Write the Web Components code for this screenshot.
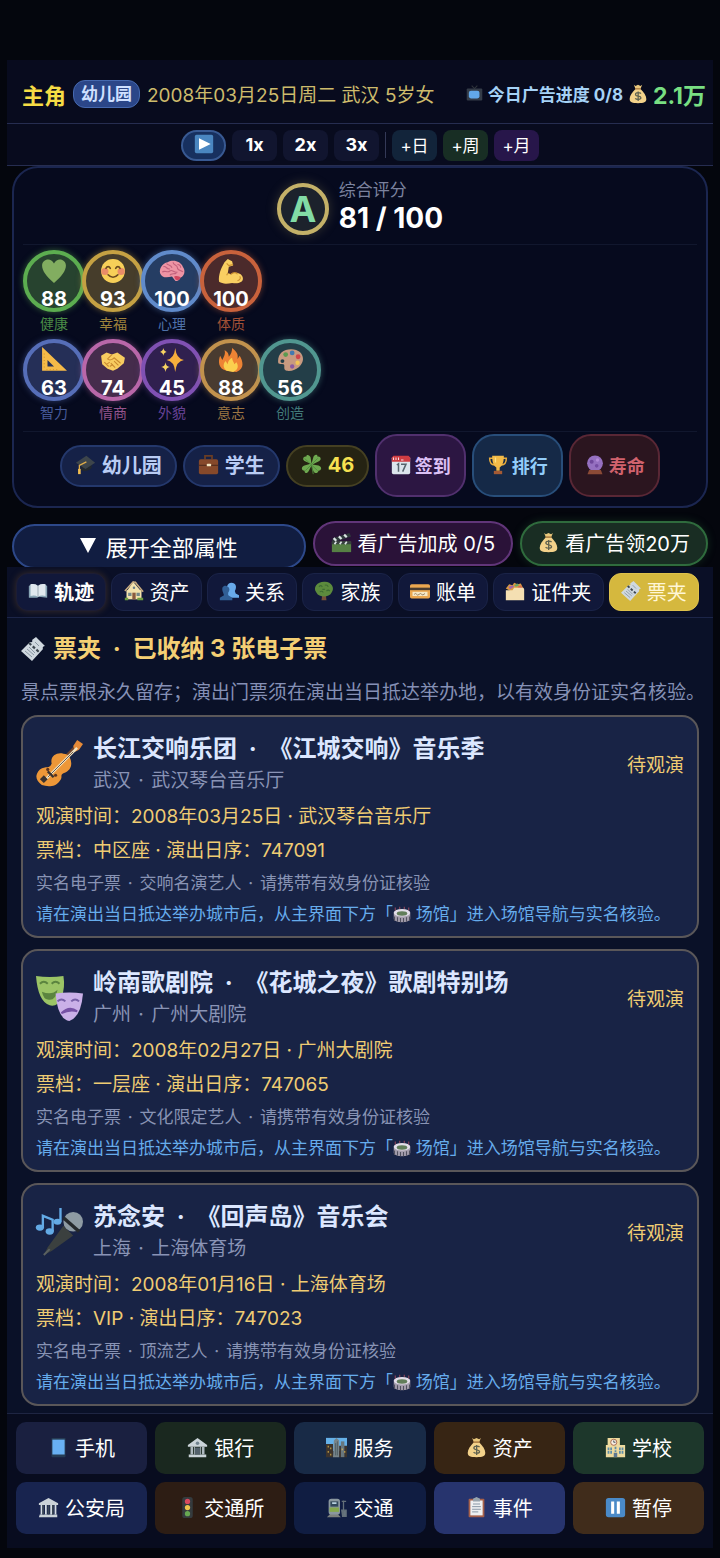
<!DOCTYPE html>
<html lang="zh-CN">
<head>
<meta charset="utf-8">
<meta name="viewport" content="width=device-width, initial-scale=1">
<title>票夹</title>
<style>
	body {
		margin: 0;
		padding: 60px 7px 9px;
		background: #04060d;
		color: #fff;
		font-family: Inter, "Noto Sans CJK SC", sans-serif;
		font-size: 20px;
	}
</style>
</head>
<body>
<life-app></life-app>

<script>
const ICONS = {
	play: '<rect x="1" y="1" width="22" height="22" rx="2" fill="#4a86c0"/><path d="M6 5l14 7-14 7z" fill="#fff"/>',
	pause: '<rect x="1" y="1" width="22" height="22" rx="3" fill="#4a8ac8"/><path d="M7 5h3.500v14H7zM13.500 5H17v14h-3.500z" fill="#fff"/>',
	tv: '<path d="M8 1l4 4 4-4" stroke="#30353c" stroke-width="1.500" fill="none"/><rect x="1" y="5" width="22" height="17" rx="1.500" fill="#343c48"/><rect x="4" y="8" width="15" height="11" rx="3" fill="#62a8ea"/>',
	bag: '<path d="M7 1l2 1.500L12 1l3 1.500L17 1l-2 5H9z" fill="#e9c77c"/><path d="M9 6h6c4 4 7 8 7 12 0 4-3 5-10 5S2 22 2 18c0-4 3-8 7-12z" fill="#f3d28a"/><path d="M8.500 5.800h7" stroke="#a8763c" stroke-width="1.500"/><path d="M15.500 11.500c-1-1.500-6.500-1.800-6.500 1s6.500 1.500 6.500 4-5.500 2.500-6.800.700M12.200 9v11.500" fill="none" stroke="#5f6250" stroke-width="1.500"/>',
	heart: '<path d="M12 23C5 17 1 12 1 7c0-6 8-8 11-2 3-6 11-4 11 2 0 5-4 10-11 16z" fill="#82ad60"/>',
	smile: '<circle cx="12" cy="12" r="11" fill="#f7cf58"/><circle cx="4.500" cy="12.500" r="3.300" fill="#e98c68"/><circle cx="19.500" cy="12.500" r="3.300" fill="#e98c68"/><path d="M5.500 9.500c1-2 3-2 4 0M14.500 9.500c1-2 3-2 4 0M7.500 15.500c2.500 3 6.500 3 9 0" fill="none" stroke="#6b4a20" stroke-width="1.500" stroke-linecap="round"/>',
	brain: '<path d="M1 14c-1-4 2-9 7-10 5-3 12-1 14 4 3 4 1 9-2 10-1 2-3 4-5 3l-3-4c-4 1-9 2-11-3z" fill="#ed94a4"/><path d="M14 17c3-1 5 0 6 1-1 3-5 4-6-1z" fill="#cf4660"/><path d="M4 8c3-1 3 3 6 2M7 5c1 2 4 1 5 4M13 4c0 3 4 2 4 5s4 2 5 4M3 13c2-2 5 1 7-1s4 2 7 1M10 16c1-2 4-1 6-2M17 6c2 0 3 1 3 3" fill="none" stroke="#c2617c" stroke-width="1"/>',
	muscle: '<path d="M1 22C0 16 3 9 6 4l3-3 4 2 1 4-4 1-1 6c2 0 2 1 3 1 4-3 11-1 11 4 0 4-5 5-10 4-5 1-9 1-12-1z" fill="#f9cf62"/><path d="M8 5l2 2 4-1M9 14l-1 2M12 15c2-2 5-2 6 0M20 17c1 1 1 3-2 4" fill="none" stroke="#c98d2e" stroke-width="1"/>',
	ruler: '<path d="M1 0v22h23zM6 12l6 6H6z" fill="#f5ba48" fill-rule="evenodd"/><path d="M3 6v14M5 21h12" stroke="#d39228" stroke-width="1" stroke-dasharray="1 2"/>',
	hands: '<path d="M1 8l5-3 5 2 5-2 7 5-1 5-6 5-4 2-5-2-5-4z" fill="#f8cc60"/><path d="M11 7l-4 4c2 2 5 0 6-1l6 5M4 14l4 4M10 15l4 4M13 13l4 4M6 16l3-2M9 18l3-2" fill="none" stroke="#c98a30" stroke-width="1"/>',
	sparkle: '<path d="M15 1q1 10 8 11-7 1-8 11-1-10-8-11 7-1 8-11z" fill="#f6ae3c"/><path d="M4 1q.500 3 3 3.500Q4.500 5 4 8 3.500 5 1 4.500 3.500 4 4 1zM6 14q.500 4 4 4.500-3.500.500-4 4.500-.500-4-4-4.500 3.500-.500 4-4.500z" fill="#f8d462"/>',
	fire: '<path d="M8 22C0 20 0 13 2 8l2 4c2-4 3-6 2-9 3 1 4 4 4 6 2-2 3-5 3-8 4 3 6 6 5 10l2-3c3 5 5 12-3 15z" fill="#ee8334"/><path d="M8 22c-4-3-3-7-1-9l2 3c0-3 2-5 4-6 0 3 2 4 2 6l2-2c2 3 2 7-3 9z" fill="#fbd04e"/>',
	palette: '<path d="M9 22c-4-1-1-5-3-6-3-1-5 1-5-3C1 6 6 2 13 2c7 0 11 4 11 9s-6 12-15 11z" fill="#c89a80"/><circle cx="5" cy="13" r="1.800" fill="#233e48"/><circle cx="8" cy="7" r="2.200" fill="#5a9a50"/><circle cx="14" cy="5.500" r="2.200" fill="#4379b0"/><circle cx="19.500" cy="9" r="2.200" fill="#d1464a"/><circle cx="19" cy="14.500" r="2" fill="#f2c454"/><circle cx="14" cy="18" r="2" fill="#8b5aa0"/>',
	cap: '<path d="M7 12v6c3 3 9 1 12-2v-5z" fill="#22282e"/><path d="M1 10L13 2l10 8-11 7z" fill="#3d454b"/><path d="M13 9L5 13v6" fill="none" stroke="#e0ae4a" stroke-width="1.500"/><path d="M3.500 17h3v6h-3z" fill="#f1bd50"/>',
	case: '<path d="M8 6V2h8v4" fill="none" stroke="#6a3d24" stroke-width="2"/><rect x="1" y="6" width="22" height="17" rx="2" fill="#86492a"/><path d="M1 13h22" stroke="#59301d" stroke-width="1.500"/><rect x="10" y="11" width="5" height="3" rx="1" fill="#f4e6c0"/>',
	clover: '<path d="M11 11L4 8C1 6 3 2 6 3c0-3 4-2 5 1l1 7 2-7c1-4 5-4 5-1 3-1 5 3 2 5l-8 4 7 1c5 2 3 6 0 6-1 4-5 3-6 0l-2-6-3 6c-2 4-5 3-5 0-4 0-4-5 0-6z" fill="#6ea950"/><path d="M12 12l2 11M4 5l15 14M19 5L5 19" fill="none" stroke="#4f8c3e" stroke-width="1"/>',
	calendar: '<rect x="1" y="2" width="22" height="21" rx="2" fill="#dce5ec"/><path d="M1 8V3l2-2h18l2 2v5z" fill="#cf3c42"/><path d="M3 3v3M6 3v3M9 3v3M12 6h3" stroke="#fff"/><path d="M7 12l2-1.500V20M12 11h6l-4 9" fill="none" stroke="#56646c" stroke-width="1.800"/>',
	trophy: '<path d="M6 4H2c0 6 3 8 6 8M18 4h4c0 6-3 8-6 8" fill="none" stroke="#e9ac3c" stroke-width="1.800"/><path d="M5 1h14c0 9-2 12-5 14v4h-4v-4C7 13 5 10 5 1z" fill="#f3bb48"/><path d="M7 19h10v4H7z" fill="#a45a34"/><path d="M9 3v6" stroke="#fbe187" stroke-width="1.500"/>',
	crystal: '<circle cx="12" cy="10" r="9.500" fill="#9570c0"/><path d="M5 18h14l2 5H3z" fill="#8b4a36"/><circle cx="8" cy="8" r="2.400" fill="#70489c"/><circle cx="15" cy="6" r="2" fill="#b38bd8"/><circle cx="14" cy="13" r="2.200" fill="#754da3"/>',
	clapper: '<path d="M1 11h22v12H1z" fill="#568044"/><path d="M1 11L2 7l19-6 2 4-18 6z" fill="#2f3a3c"/><path d="M3 7l3 3M9 5l3 3M15 3l3 3" stroke="#dce4e4" stroke-width="2.500"/><path d="M1 11h22v3H1z" fill="#37423e"/><path d="M4 14l2-3M10 14l2-3M16 14l2-3" stroke="#dce4e4" stroke-width="2"/>',
	book: '<path d="M1 6l3-2c3-1 6 0 8 2 2-2 5-3 8-2l3 2v14l-10-1-2 1-10 0z" fill="#88a5b5"/><path d="M3 4c4-1 7 0 9 2v13c-3-2-6-2-9-1zM21 4c-4-1-7 0-9 2v13c3-2 6-2 9-1z" fill="#e0e8ee"/><path d="M12 6v13" stroke="#90a0aa"/>',
	house: '<path d="M3 11h18v11H3z" fill="#f3e2ac"/><path d="M3 13l8-12 10 12z" fill="#f3e2ac"/><path d="M1 12L11 1l4 1M13 1l10 12" fill="none" stroke="#c8ab80" stroke-width="1.800"/><path d="M5 14h4v4H5zM15 14h4v4h-4z" fill="#75878a"/><path d="M10 14h4v8h-4z" fill="#8a5a40"/><path d="M1 20h4v3H1zM16 20h7v3h-7z" fill="#6c9d42"/><circle cx="12" cy="8" r="1.500" fill="#6b7d86"/>',
	people: '<path d="M10 15v-4c-1-2-1-9 5-9 5 0 7 5 4 10l1 3 4 2v3H12z" fill="#68aaea"/><path d="M1 23v-3l5-3-1-3C2 7 6 5 9 6s5 4 2 8v3l5 3v3z" fill="#315f96"/>',
	tree: '<path d="M10 16h4l1 7H9z" fill="#765038"/><path d="M12 1c8-1 14 7 9 13-3 6-15 6-18 0C-2 8 4 1 12 1z" fill="#5c8b3d"/><path d="M6 7q2-3 4 0M13 5q3-1 4 2M7 13q3-2 4 1M15 12q2-2 4 0M10 10h3" fill="none" stroke="#3e6c33" stroke-width="1.300"/>',
	card: '<rect x="0" y="4" width="24" height="17" rx="2" fill="#eba750"/><path d="M0 8h24v3H0z" fill="#4a3c30"/><path d="M3 13h18v5H3z" fill="#f6e7c5"/><path d="M5 16q2-2 3 0t3 0 3 0 4-1" fill="none" stroke="#8a7254"/>',
	folder: '<path d="M1 9l4-5 4 1 2-3 4 2 4-1 4 8-9 5z" fill="#d99a42"/><path d="M4 7l5-2 2 2-5 3z" fill="#a266a8"/><path d="M11 5l4-2 2 2-4 2z" fill="#66a466"/><path d="M15 7l4-2 2 3-4 2z" fill="#d66a4c"/><path d="M1 11h8l2-3h11l1 2v13H1z" fill="#f4dfb2"/>',
	ticket: '<path d="M15 0l9 9c-2 0-3 2-2 3L11 24l-11-10 9-9c2 1 3-1 2-2z" fill="#cfd8df"/><path d="M8 6l10 9" stroke="#3c464f" stroke-width="2.200" stroke-dasharray="3 2"/><path d="M4 14l7 6M6 12l7 6M8 10l6 6" stroke="#8996a2" stroke-width="1"/><path d="M14 5l4 4" stroke="#8996a2"/>',
	violin: '<path d="M12 12l9-9" stroke="#70452e" stroke-width="2"/><path d="M19 3l2-3 3 2-2 3-2 1z" fill="#e68a38"/><path d="M2 15c3-2 5 0 6-3-1-4 3-6 6-5 3 0 4 3 4 5s-1 4-4 5c-2 1 0 2-2 4-2 3-6 3-9 2-3-2-4-5-1-8z" fill="#ed9738"/><path d="M5 20L21 4" stroke="#f3e5c3" stroke-width="1.300"/><path d="M6 19L19 6" stroke="#625148" stroke-width=".500"/><path d="M2 20l2-2 2 2-2 2z" fill="#3b3330"/><path d="M6 16l3 3" stroke="#3b3330" stroke-width="1.200"/><circle cx="6" cy="15" r=".800" fill="#5c3420"/><circle cx="10" cy="18" r=".800" fill="#5c3420"/>',
	masks: '<path d="M0 1q7 1 14 0 1 6-1 11t-6 4Q1 14 0 1z" fill="#9bc466"/><path d="M2 5q2-2 4 0M8 5q2-2 4 0" stroke="#5b843f" fill="none"/><path d="M3 9q5 2 8-1-1 6-5 5-2 0-3-4z" fill="#5b843f"/><path d="M10 10q7-1 14 0-1 12-7 14-6-1-7-14z" fill="#cab0e8"/><path d="M11 14q2-2 4 0M18 14q2-2 4 0" stroke="#7860a8" fill="none"/><path d="M13 20q4-4 8-1-4-1-8 1z" fill="#7651a5" stroke="#7651a5"/>',
	mic: '<path d="M14 9l5 5-11 8-4 2 2-4z" fill="#3b403f"/><path d="M7 21l-3 3" stroke="#5a6060"/><circle cx="19" cy="7" r="5" fill="#8e9ba3"/><path d="M14 5l8 7" stroke="#25292c" stroke-width="1.800"/><ellipse cx="2" cy="10" rx="2.100" ry="1.600" fill="#63aae5"/><ellipse cx="7" cy="12" rx="2.100" ry="1.600" fill="#63aae5"/><path d="M3.500 10V4l5 2v6M12.500 7V0" fill="none" stroke="#63aae5" stroke-width="1.200"/><ellipse cx="11" cy="7" rx="2" ry="1.500" fill="#63aae5"/>',
	stadium: '<path d="M1 9v8c0 6 22 6 22 0V9z" fill="#a69fae"/><path d="M2 14v6M6 15v6M10 16v6M14 16v6M18 15v6M22 14v6" stroke="#50505e" stroke-width="1.500"/><ellipse cx="12" cy="9" rx="11" ry="5" fill="#e2dde8"/><ellipse cx="12" cy="10" rx="7" ry="3" fill="#617d59"/><path d="M3 6V2M9 4V1M15 4V1M21 6V2" stroke="#c65568"/>',
	phone: '<rect x="4" y="1" width="16" height="22" rx="1" fill="#263c54"/><path d="M5 3h14v17H5z" fill="#68b0f3"/>',
	bank: '<path d="M1 9l11-8 11 8v2H1zM2 20h20v3H2z" fill="#cbd4d9"/><path d="M4 11h3v9H4zM17 11h3v9h-3zM8 11h1v9H8zM15 11h1v9h-1z" fill="#aeb8bf"/><path d="M9 12h6v8H9z" fill="#53616b"/><circle cx="12" cy="7" r="2" fill="#728490"/>',
	museum: '<path d="M1 7l11-6 11 6v2H1zM2 20h20v3H1z" fill="#cbd3d8"/><path d="M4 9v11M9 9v11M15 9v11M20 9v11" stroke="#d5dde2" stroke-width="2"/><path d="M6 9v11M12 9v11M17 9v11" stroke="#3b4855" stroke-width="2"/>',
	city: '<path d="M0 1h24v15H0z" fill="#65b1e8"/><path d="M0 8h8v15H0zM15 10h9v13h-9z" fill="#3d342d"/><path d="M9 4l3-3 3 3v19H8z" fill="#778489"/><path d="M17 5h4v18h-4z" fill="#68777e"/><path d="M2 11h1M5 13h1M2 17h1M5 20h1M18 14h1M21 17h1" stroke="#f1c44e" stroke-width="2"/><path d="M11 7v14M13 5v16" stroke="#4c5b62"/>',
	school: '<path d="M3 1h14v8h6v14H1V9h2z" fill="#edda9e"/><circle cx="10" cy="6" r="3.500" fill="#f5eee2" stroke="#a45f45"/><path d="M10 4v2h2" stroke="#384450" fill="none"/><path d="M4 12v8M7 12v8M17 12v8M20 12v8M12 11v6" stroke="#5d8eaa" stroke-width="2" stroke-dasharray="3 1"/><path d="M10 18h4v5h-4z" fill="#5e7890"/>',
	light: '<rect x="6" y="0" width="12" height="24" rx="3" fill="#353b3e"/><circle cx="12" cy="5" r="3" fill="#d8495e"/><circle cx="12" cy="12" r="3" fill="#edc54d"/><circle cx="12" cy="19" r="3" fill="#67a852"/>',
	station: '<path d="M5 19l-4 4h16l-4-4z" fill="#7d817e"/><rect x="3" y="2" width="13" height="18" rx="3" fill="#8a979f"/><path d="M5 5h9v6H5z" fill="#33495b"/><path d="M4 12h11v5H4z" fill="#86a94d"/><path d="M7 7h5" stroke="#b9d2df" stroke-width="2"/><path d="M20 4v16M18 5h5M18 15h5v7h-4z" fill="#68777f" stroke="#637079" stroke-width="1.500"/>',
	clipboard: '<rect x="3" y="2" width="18" height="21" rx="1" fill="#a6604a"/><path d="M5 4h14v17H5z" fill="#eef0f2"/><path d="M8 2l4-2 4 2v3H8z" fill="#98a4ad"/><path d="M8 8h8M7 11h10M7 14h10M7 17h7" stroke="#7b8b9b"/>'
};

class LifeIcon extends HTMLElement {
	connectedCallback() {
		const shadow = this.attachShadow({ mode: 'open' });
		shadow.innerHTML = `
      <style>
        :host {
          display: inline-block;
          flex: none;
          width: var(--icon-size, 20px);
          height: var(--icon-size, 20px);
          vertical-align: middle;
        }
        svg { display: block; width: 100%; height: 100%; overflow: visible; }
      </style>
      <svg viewBox="0 0 24 24" aria-hidden="true">${ICONS[this.getAttribute('name')] ?? ''}</svg>
    `;
	}
}

// Shared button: colours and box come in through custom properties
class LifeButton extends HTMLElement {
	connectedCallback() {
		const shadow = this.attachShadow({ mode: 'open' });
		const icon = this.getAttribute('icon');
		shadow.innerHTML = `
      <style>
        :host { display: block; }
        button {
          box-sizing: border-box;
          display: flex;
          align-items: center;
          justify-content: center;
          gap: var(--gap, 6px);
          width: 100%;
          min-height: var(--height, 38px);
          padding: 0 var(--pad, 0px) 2px;
          border: var(--line, 1px) solid var(--edge, transparent);
          border-radius: var(--radius, 12px);
          background: var(--fill, #12183a);
          box-shadow: var(--glow, none);
          color: inherit;
          font: inherit;
          white-space: nowrap;
          cursor: pointer;
        }
      </style>
      <button type="button">
        ${icon ? `<life-icon name="${icon}"></life-icon>` : ''}
        <slot></slot>
      </button>
    `;
		if (this.hasAttribute('label')) {
			shadow.querySelector('button').setAttribute('aria-label', this.getAttribute('label'));
		}
	}
}

class StatusHeader extends HTMLElement {
	connectedCallback() {
		this.attachShadow({ mode: 'open' }).innerHTML = `
      <style>
        :host {
          display: flex;
          align-items: center;
          justify-content: space-between;
          min-height: 63px;
          padding: 4px 7px 0 15px;
          box-sizing: border-box;
          background: #080b1e;
          white-space: nowrap;
        }
        div { display: flex; align-items: center; gap: 7px; }
        .name { color: #f6dd45; font-size: 22px; font-weight: 700; }
        .stage {
          padding: 0 7px;
          border: 1px solid #4568ae;
          border-radius: 12px;
          background: #2b4688;
          color: #cfe0ff;
          font-size: 17px;
          font-weight: 700;
          line-height: 26px;
        }
        .date { color: #cdbb6c; font-size: 19px; }
        .ads { color: #a5d2f6; font-size: 17px; font-weight: 700; }
        .money { color: #78df82; font-size: 23px; font-weight: 700; }
        .right { gap: 5px; --icon-size: 17px; }
        .bag { --icon-size: 20px; }
      </style>
      <div>
        <span class="name">主角</span>
        <span class="stage">幼儿园</span>
        <span class="date">2008年03月25日周二 武汉 5岁女</span>
      </div>
      <div class="right">
        <life-icon name="tv"></life-icon>
        <span class="ads">今日广告进度 0/8</span>
        <life-icon class="bag" name="bag"></life-icon>
        <span class="money">2.1万</span>
      </div>
    `;
	}
}

class SpeedBar extends HTMLElement {
	connectedCallback() {
		this.attachShadow({ mode: 'open' }).innerHTML = `
      <style>
        :host {
          display: flex;
          align-items: center;
          justify-content: center;
          gap: 6px;
          min-height: 43px;
          border-top: 1px solid #262d50;
          border-bottom: 1px solid #262d50;
          background: #080b1e;
          padding-top: 1px;
          box-sizing: border-box;
          font-size: 17px;
        }
        life-button { width: 45px; --line: 0px; --height: 31px; --radius: 8px; --fill: #11152f; }
        .play { --radius: 16px; --fill: #17305f; --edge: #385992; --line: 2px; --icon-size: 20px; }
        .speed { font-size: 18px; font-weight: 700; }
        .day { --fill: #12243a; }
        .week { --fill: #182e24; }
        .month { --fill: #27164a; }
        i { width: 1px; height: 26px; background: #343957; }
      </style>
      <life-button class="play" icon="play" label="播放"></life-button>
      <life-button class="speed">1x</life-button>
      <life-button class="speed">2x</life-button>
      <life-button class="speed">3x</life-button>
      <i></i>
      <life-button class="day">+日</life-button>
      <life-button class="week">+周</life-button>
      <life-button class="month">+月</life-button>
    `;
	}
}

class StatRing extends HTMLElement {
	connectedCallback() {
		this.style.setProperty('--ring', this.getAttribute('ring'));
		this.style.setProperty('--core', this.getAttribute('core'));
		this.attachShadow({ mode: 'open' }).innerHTML = `
      <style>
        :host {
          display: block;
          width: 62px;
          margin-right: -3px;
          text-align: center;
          color: var(--ring);
          font-size: 14px;
          line-height: 24px;
          --icon-size: 26px;
        }
        .ring {
          display: flex;
          flex-direction: column;
          align-items: center;
          box-sizing: border-box;
          height: 62px;
          padding-top: 4px;
          border: 4px solid var(--ring);
          border-radius: 50%;
          background: var(--core);
          box-shadow: 0 0 6px color-mix(in srgb, var(--ring) 50%, transparent);
        }
        b { color: #fff; font-size: 20px; line-height: 30px; }
        .label { opacity: .8; }
      </style>
      <div class="ring">
        <life-icon name="${this.getAttribute('icon')}"></life-icon>
        <b>${this.getAttribute('value')}</b>
      </div>
      <div class="label"><slot></slot></div>
    `;
	}
}

class ScorePanel extends HTMLElement {
	connectedCallback() {
		this.attachShadow({ mode: 'open' }).innerHTML = `
      <style>
        :host {
          display: block;
          margin: 0 5px;
          padding: 0 9px;
          border: 2px solid #1b2650;
          border-radius: 26px;
          background: #060a1e;
        }
        .score {
          display: flex;
          align-items: center;
          justify-content: center;
          gap: 10px;
          padding: 13px 0 7px;
          border-bottom: 1px solid #11172e;
        }
        .grade {
          display: grid;
          place-items: center;
          box-sizing: border-box;
          width: 52px;
          height: 52px;
          border: 4px solid #c4b168;
          border-radius: 50%;
          background: #1c222c;
          box-shadow: 0 0 12px #c4b16840;
          color: #82dba5;
          font-size: 36px;
          font-weight: 700;
        }
        .label { color: #7b829e; font-size: 17px; line-height: 18px; }
        .value { font-size: 28px; font-weight: 700; line-height: 38px; }
        .stats { padding: 5px 0 6px; border-bottom: 1px solid #11172e; }
        .row { display: flex; }
        .row + .row { margin-top: 3px; }
        .pills {
          display: flex;
          align-items: center;
          justify-content: center;
          gap: 6px;
          padding: 2px 0 9px;
          font-weight: 700;
          --radius: 22px;
          --icon-size: 21px;
        }
        .pills life-button { --line: 2px; --height: 42px; --pad: 13px; color: #b9ccf4; --fill: #152147; --edge: #24386c; }
        .pills .luck { color: #f6e151; --fill: #252313; --edge: #454022; }
        .pills .big { box-sizing: border-box; width: 91px; font-size: 18px; --height: 63px; --gap: 4px; --pad: 9px; --icon-size: 20px; }
        .pills .sign { color: #dcc0f5; --fill: #2c1642; --edge: #51306e; }
        .pills .rank { color: #92cdfa; --fill: #152947; --edge: #284e7a; }
        .pills .life { color: #d0626d; --fill: #2b151f; --edge: #592735; }
      </style>
      <div class="score">
        <span class="grade">A</span>
        <div>
          <div class="label">综合评分</div>
          <div class="value">81 / 100</div>
        </div>
      </div>
      <div class="stats">
        <div class="row">
          <stat-ring icon="heart" value="88" ring="#5cad50" core="#27432f">健康</stat-ring>
          <stat-ring icon="smile" value="93" ring="#c5a143" core="#463d2b">幸福</stat-ring>
          <stat-ring icon="brain" value="100" ring="#608bcb" core="#253d63">心理</stat-ring>
          <stat-ring icon="muscle" value="100" ring="#c9623c" core="#4b2a2b">体质</stat-ring>
        </div>
        <div class="row">
          <stat-ring icon="ruler" value="63" ring="#566eb8" core="#252f57">智力</stat-ring>
          <stat-ring icon="hands" value="74" ring="#b967a9" core="#452c4c">情商</stat-ring>
          <stat-ring icon="sparkle" value="45" ring="#8051b3" core="#30204f">外貌</stat-ring>
          <stat-ring icon="fire" value="88" ring="#c2924d" core="#493b30">意志</stat-ring>
          <stat-ring icon="palette" value="56" ring="#519790" core="#233e48">创造</stat-ring>
        </div>
      </div>
      <div class="pills">
        <life-button icon="cap">幼儿园</life-button>
        <life-button icon="case">学生</life-button>
        <life-button class="luck" icon="clover">46</life-button>
        <life-button class="big sign" icon="calendar">签到</life-button>
        <life-button class="big rank" icon="trophy">排行</life-button>
        <life-button class="big life" icon="crystal">寿命</life-button>
      </div>
    `;
	}
}

class ActionRow extends HTMLElement {
	connectedCallback() {
		this.attachShadow({ mode: 'open' }).innerHTML = `
      <style>
        :host {
          display: flex;
          align-items: flex-start;
          gap: 7px;
          padding: 13px 5px 0;
          --line: 2px;
          --height: 45px;
          --radius: 23px;
          --pad: 16px;
          --icon-size: 21px;
        }
        .expand { flex: 1; margin-top: 3px; margin-bottom: -2px; font-size: 22px; --fill: #111d41; --edge: #2d4889; }
        .boost { --fill: #2a1238; --edge: #613579; }
        .cash { --fill: #192d23; --edge: #2f6b3d; --glow: 0 0 8px #2f6b3d50; }
        i { border: 8px solid transparent; border-top: 15px solid #fff; border-bottom: 0; margin-right: 4px; }
      </style>
      <life-button class="expand"><i></i>展开全部属性</life-button>
      <life-button class="boost" icon="clapper">看广告加成 0/5</life-button>
      <life-button class="cash" icon="bag">看广告领20万</life-button>
    `;
	}
}

class TabStrip extends HTMLElement {
	connectedCallback() {
		this.attachShadow({ mode: 'open' }).innerHTML = `
      <style>
        :host {
          display: block;
          position: relative;
          padding: 6px 14px 6px 9px;
          border-bottom: 1px solid #1c2548;
          background: #0a0f26;
        }
        nav { display: flex; gap: 5px; }
        life-button { flex: 1 0 auto; --pad: 9px; --fill: #11183a; --edge: #1a2347; }
        .track { font-weight: 700; --edge: #1d1d34; --glow: 0 0 7px #8d633060; }
        .tickets { --fill: #d5b83e; --edge: #dec14b; color: #fff6d6; }
      </style>
      <nav>
        <life-button class="track" icon="book">轨迹</life-button>
        <life-button icon="house">资产</life-button>
        <life-button icon="people">关系</life-button>
        <life-button icon="tree">家族</life-button>
        <life-button icon="card">账单</life-button>
        <life-button icon="folder">证件夹</life-button>
        <life-button class="tickets" icon="ticket">票夹</life-button>
      </nav>
    `;
	}
}

class TicketCard extends HTMLElement {
	connectedCallback() {
		this.attachShadow({ mode: 'open' }).innerHTML = `
      <style>
        :host {
          display: block;
          padding: 14px 13px 7px;
          border: 2px solid #5a5759;
          border-radius: 17px;
          background: #182345;
          color: #efcc73;
          font-size: 19px;
        }
        header { display: flex; align-items: center; gap: 10px; --icon-size: 47px; }
        hgroup { flex: 1; margin: 0; }
        h3 { margin: 0; color: #dce7ff; font-size: 24px; line-height: 36px; }
        p { margin: 0; white-space: nowrap; }
        i { padding: 0 2px; font-style: normal; }
        .place { color: #8993b5; line-height: 28px; }
        .line { line-height: 34px; }
        .note { color: #8893b4; font-size: 17px; line-height: 31px; }
        .hint { color: #66acec; font-size: 17px; line-height: 30px; --icon-size: 18px; }
        main { padding-top: 5px; }
      </style>
      <header>
        <life-icon name="${this.getAttribute('icon')}"></life-icon>
        <hgroup>
          <h3><slot name="title"></slot></h3>
          <p class="place"><slot name="place"></slot></p>
        </hgroup>
        <span class="status">待观演</span>
      </header>
      <main>
        <p class="line">观演时间：<slot name="time"></slot></p>
        <p class="line">票档：<slot name="seat"></slot></p>
        <p class="note">实名电子票 <i>·</i> <slot name="artist"></slot> <i>·</i> 请携带有效身份证核验</p>
        <p class="hint">请在演出当日抵达举办城市后，从主界面下方「<life-icon name="stadium"></life-icon> 场馆」进入场馆导航与实名核验。</p>
      </main>
    `;
	}
}

class TicketWallet extends HTMLElement {
	connectedCallback() {
		this.attachShadow({ mode: 'open' }).innerHTML = `
      <style>
        :host {
          display: block;
          padding: 13px 14px 7px;
          background: #0a1128;
        }
        h2 {
          display: flex;
          align-items: center;
          gap: 8px;
          margin: 0;
          color: #f4cf74;
          font-size: 24px;
          line-height: 36px;
          --icon-size: 24px;
        }
        i { padding: 0 2px; font-style: normal; }
        h2 i, [slot="title"] i { padding: 0 6px; }
        .about { margin: 11px 0 7px; color: #8590b5; font-size: 19px; line-height: 30px; white-space: nowrap; }
        .list { display: grid; gap: 11px; }
      </style>
      <h2><life-icon name="ticket"></life-icon><span>票夹 <i>·</i> 已收纳 3 张电子票</span></h2>
      <p class="about">景点票根永久留存；演出门票须在演出当日抵达举办地，以有效身份证实名核验。</p>
      <div class="list">
        <ticket-card icon="violin">
          <span slot="title">长江交响乐团 <i>·</i> 《江城交响》音乐季</span>
          <span slot="place">武汉 <i>·</i> 武汉琴台音乐厅</span>
          <span slot="time">2008年03月25日 · 武汉琴台音乐厅</span>
          <span slot="seat">中区座 · 演出日序：747091</span>
          <span slot="artist">交响名演艺人</span>
        </ticket-card>
        <ticket-card icon="masks">
          <span slot="title">岭南歌剧院 <i>·</i> 《花城之夜》歌剧特别场</span>
          <span slot="place">广州 <i>·</i> 广州大剧院</span>
          <span slot="time">2008年02月27日 · 广州大剧院</span>
          <span slot="seat">一层座 · 演出日序：747065</span>
          <span slot="artist">文化限定艺人</span>
        </ticket-card>
        <ticket-card icon="mic">
          <span slot="title">苏念安 <i>·</i> 《回声岛》音乐会</span>
          <span slot="place">上海 <i>·</i> 上海体育场</span>
          <span slot="time">2008年01月16日 · 上海体育场</span>
          <span slot="seat">VIP · 演出日序：747023</span>
          <span slot="artist">顶流艺人</span>
        </ticket-card>
      </div>
    `;
	}
}

class BottomNav extends HTMLElement {
	connectedCallback() {
		this.attachShadow({ mode: 'open' }).innerHTML = `
      <style>
        :host {
          display: block;
          padding: 8px 9px 14px;
          border-top: 1px solid #1e2542;
          background: #080c1f;
        }
        nav {
          display: grid;
          grid-template-columns: repeat(5, 1fr);
          gap: 8px;
          --height: 52px;
          --line: 0px;
          --radius: 10px;
          --icon-size: 21px;
        }
      </style>
      <nav>
        <life-button icon="phone" style="--fill: #1a2040">手机</life-button>
        <life-button icon="bank" style="--fill: #1a281f">银行</life-button>
        <life-button icon="city" style="--fill: #182a46">服务</life-button>
        <life-button icon="bag" style="--fill: #372514">资产</life-button>
        <life-button icon="school" style="--fill: #1d372b">学校</life-button>
        <life-button icon="museum" style="--fill: #18244f">公安局</life-button>
        <life-button icon="light" style="--fill: #2d1d14">交通所</life-button>
        <life-button icon="station" style="--fill: #101d42">交通</life-button>
        <life-button icon="clipboard" style="--fill: #27346e">事件</life-button>
        <life-button icon="pause" style="--fill: #402c1b">暂停</life-button>
      </nav>
    `;
	}
}

class LifeApp extends HTMLElement {
	connectedCallback() {
		this.attachShadow({ mode: 'open' }).innerHTML = `
      <style>
        :host { display: block; }
      </style>
      <status-header></status-header>
      <speed-bar></speed-bar>
      <score-panel></score-panel>
      <action-row></action-row>
      <tab-strip></tab-strip>
      <ticket-wallet></ticket-wallet>
      <bottom-nav></bottom-nav>
    `;
	}
}

customElements.define('life-icon', LifeIcon);
customElements.define('life-button', LifeButton);
customElements.define('status-header', StatusHeader);
customElements.define('speed-bar', SpeedBar);
customElements.define('stat-ring', StatRing);
customElements.define('score-panel', ScorePanel);
customElements.define('action-row', ActionRow);
customElements.define('tab-strip', TabStrip);
customElements.define('ticket-card', TicketCard);
customElements.define('ticket-wallet', TicketWallet);
customElements.define('bottom-nav', BottomNav);
customElements.define('life-app', LifeApp);
</script>
</body>
</html>
